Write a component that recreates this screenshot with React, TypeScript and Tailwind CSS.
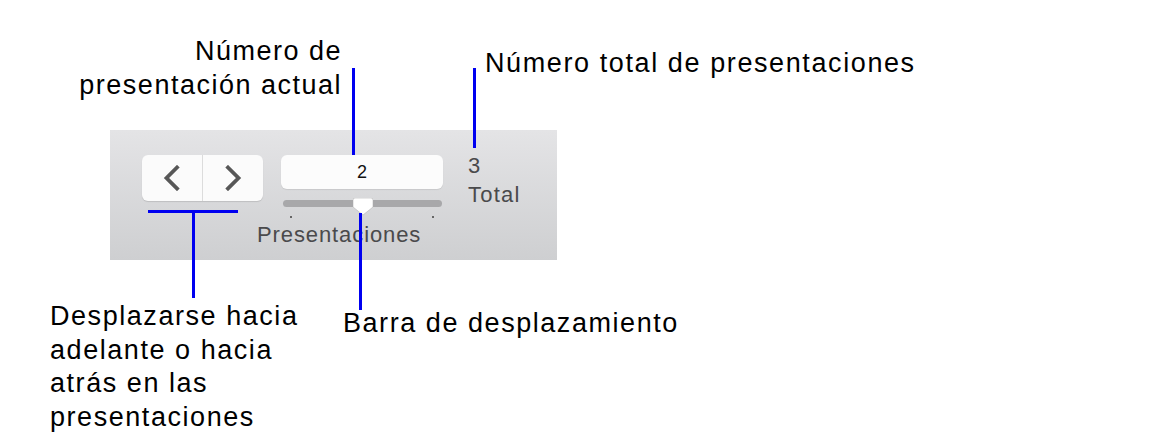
import React from "react";

const font = { fontFamily: '"Liberation Sans", Arial, sans-serif' };

function Chevron({ dir }: { dir: "left" | "right" }) {
  return (
    <svg width="20" height="26" viewBox="0 0 20 26" fill="none">
      <path
        d={dir === "left" ? "M15 2.5 L4.5 13 L15 23.5" : "M5 2.5 L15.5 13 L5 23.5"}
        stroke="#575757"
        strokeWidth="3.8"
        strokeLinecap="square"
        strokeLinejoin="miter"
      />
    </svg>
  );
}

function Toolbar() {
  return (
    <div className="flex h-[130px] w-[447px] bg-gradient-to-b from-[#e4e4e6] to-[#cecfd1] pl-[32px] pt-[25px]">
      {/* back / forward segmented control */}
      <div className="flex h-[46px] w-[121px] rounded-[6px] bg-[#fbfbfb] shadow-[0_1px_1px_rgba(0,0,0,0.12)]">
        <button className="flex w-[61px] items-center justify-center border-r border-[#dcdcdc]">
          <Chevron dir="left" />
        </button>
        <button className="flex flex-1 items-center justify-center">
          <Chevron dir="right" />
        </button>
      </div>

      {/* current slide field + scrubber */}
      <div className="ml-[18px] flex w-[162px] flex-col">
        <div className="flex h-[34px] items-center justify-center rounded-[6px] bg-[#fcfcfc] text-[18px] text-[#111] shadow-[0_1px_1px_rgba(0,0,0,0.08)]">
          2
        </div>
        <div className="relative ml-[2px] mt-[11px] h-[7px] w-[159px] rounded-full bg-[#a8a8aa]">
          <svg className="absolute left-[70px] top-[-2px]" width="20" height="18" viewBox="0 0 20 18">
            <path d="M2 0 H18 Q20 0 20 2 V9 L10 17 L0 9 V2 Q0 0 2 0 Z" fill="#ffffff" stroke="#b5b5b5" strokeWidth="0.6" />
          </svg>
        </div>
        <div className="mt-[9px] flex justify-between px-[9px]">
          <span className="h-[2px] w-[2px] bg-[#666]" />
          <span className="h-[2px] w-[2px] bg-[#666]" />
        </div>
        <div className="-ml-[24px] mt-[4px] w-[170px] text-[22px] leading-[26px] tracking-[0.9px] text-[#4a4a4c]">
          Presentaciones
        </div>
      </div>

      {/* total count */}
      <div className="ml-[25px] mt-[-4px] flex flex-col text-[22px] leading-[29px] tracking-[1.2px] text-[#4a4a4c]">
        <span>3</span>
        <span>Total</span>
      </div>
    </div>
  );
}

export default function App() {
  return (
    <div className="relative h-[447px] w-[1154px] bg-white text-black" style={font}>
      <div className="pl-[110px] pt-[130px]">
        <Toolbar />
      </div>

      {/* callout labels */}
      <div className="absolute right-[812px] top-[34px] text-right text-[27px] leading-[34px] tracking-[1.5px]">
        <div>Número de</div>
        <div>presentación actual</div>
      </div>
      <div className="absolute left-[485px] top-[46px] text-[27px] leading-[34px] tracking-[1.6px]">
        Número total de presentaciones
      </div>
      <div className="absolute left-[343px] top-[306px] text-[27px] leading-[34px] tracking-[1.55px]">
        Barra de desplazamiento
      </div>
      <div className="absolute left-[50px] top-[300px] text-[27px] leading-[33.5px] tracking-[1.55px]">
        <div>Desplazarse hacia</div>
        <div>adelante o hacia</div>
        <div>atrás en las</div>
        <div>presentaciones</div>
      </div>

      {/* leader lines */}
      <div className="absolute left-[352px] top-[68px] h-[87px] w-[3px] bg-[#0000f0]" />
      <div className="absolute left-[473px] top-[68px] h-[80px] w-[3px] bg-[#0000f0]" />
      <div className="absolute left-[148px] top-[210px] h-[3px] w-[90px] bg-[#0000f0]" />
      <div className="absolute left-[192px] top-[211px] h-[87px] w-[3px] bg-[#0000f0]" />
      <div className="absolute left-[359px] top-[213px] h-[97px] w-[3px] bg-[#0000f0]" />
    </div>
  );
}
